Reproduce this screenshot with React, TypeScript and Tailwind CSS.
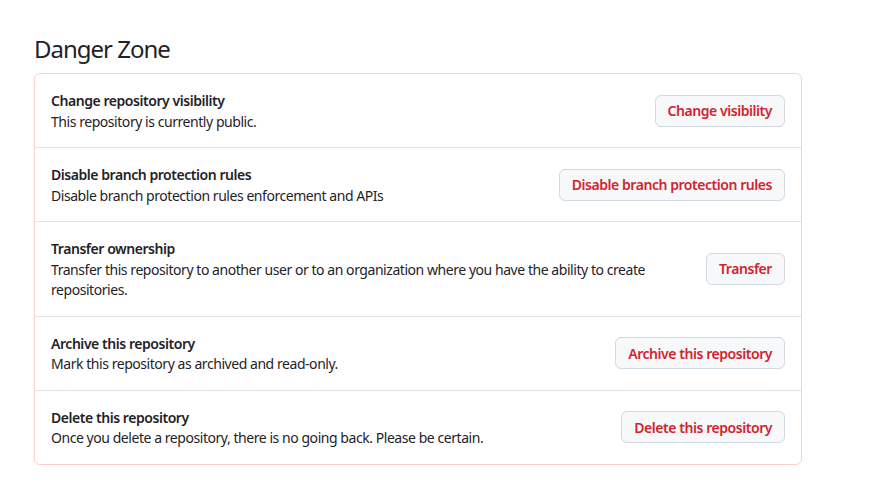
import React from 'react';

interface DangerItem {
  title: string;
  description: string;
  action: string;
}

const ITEMS: DangerItem[] = [
  {
    title: 'Change repository visibility',
    description: 'This repository is currently public.',
    action: 'Change visibility',
  },
  {
    title: 'Disable branch protection rules',
    description: 'Disable branch protection rules enforcement and APIs',
    action: 'Disable branch protection rules',
  },
  {
    title: 'Transfer ownership',
    description:
      'Transfer this repository to another user or to an organization where you have the ability to create repositories.',
    action: 'Transfer',
  },
  {
    title: 'Archive this repository',
    description: 'Mark this repository as archived and read-only.',
    action: 'Archive this repository',
  },
  {
    title: 'Delete this repository',
    description: 'Once you delete a repository, there is no going back. Please be certain.',
    action: 'Delete this repository',
  },
];

const App: React.FC = () => {
  return (
    <div className="min-h-screen bg-white font-['Noto_Sans',sans-serif] tracking-[-0.028em] text-[#1f2328]">
      <div className="w-[768px] ml-[34px] pt-[31px]">
        <h2 className="text-[24px] leading-[36px] font-normal tracking-[-0.042em] mb-[6px]">Danger Zone</h2>
        <div className="border border-[#ffcecb] rounded-md">
          {ITEMS.map((item, i) => (
            <div
              key={item.title}
              className={`flex items-center gap-4 px-4 py-4 ${i > 0 ? 'border-t border-[#d1d9e0b3]' : ''}`}
            >
              <div className="flex-1 mt-px -mb-px text-[14px] leading-[20.5px]">
                <div className="font-semibold">{item.title}</div>
                <p>{item.description}</p>
              </div>
              <button className="shrink-0 h-8 px-3 rounded-md border border-[#d1d9e0] bg-[#f6f8fa] text-[14px] font-semibold text-[#d1242f] whitespace-nowrap">
                {item.action}
              </button>
            </div>
          ))}
        </div>
      </div>
    </div>
  );
};

export default App;
